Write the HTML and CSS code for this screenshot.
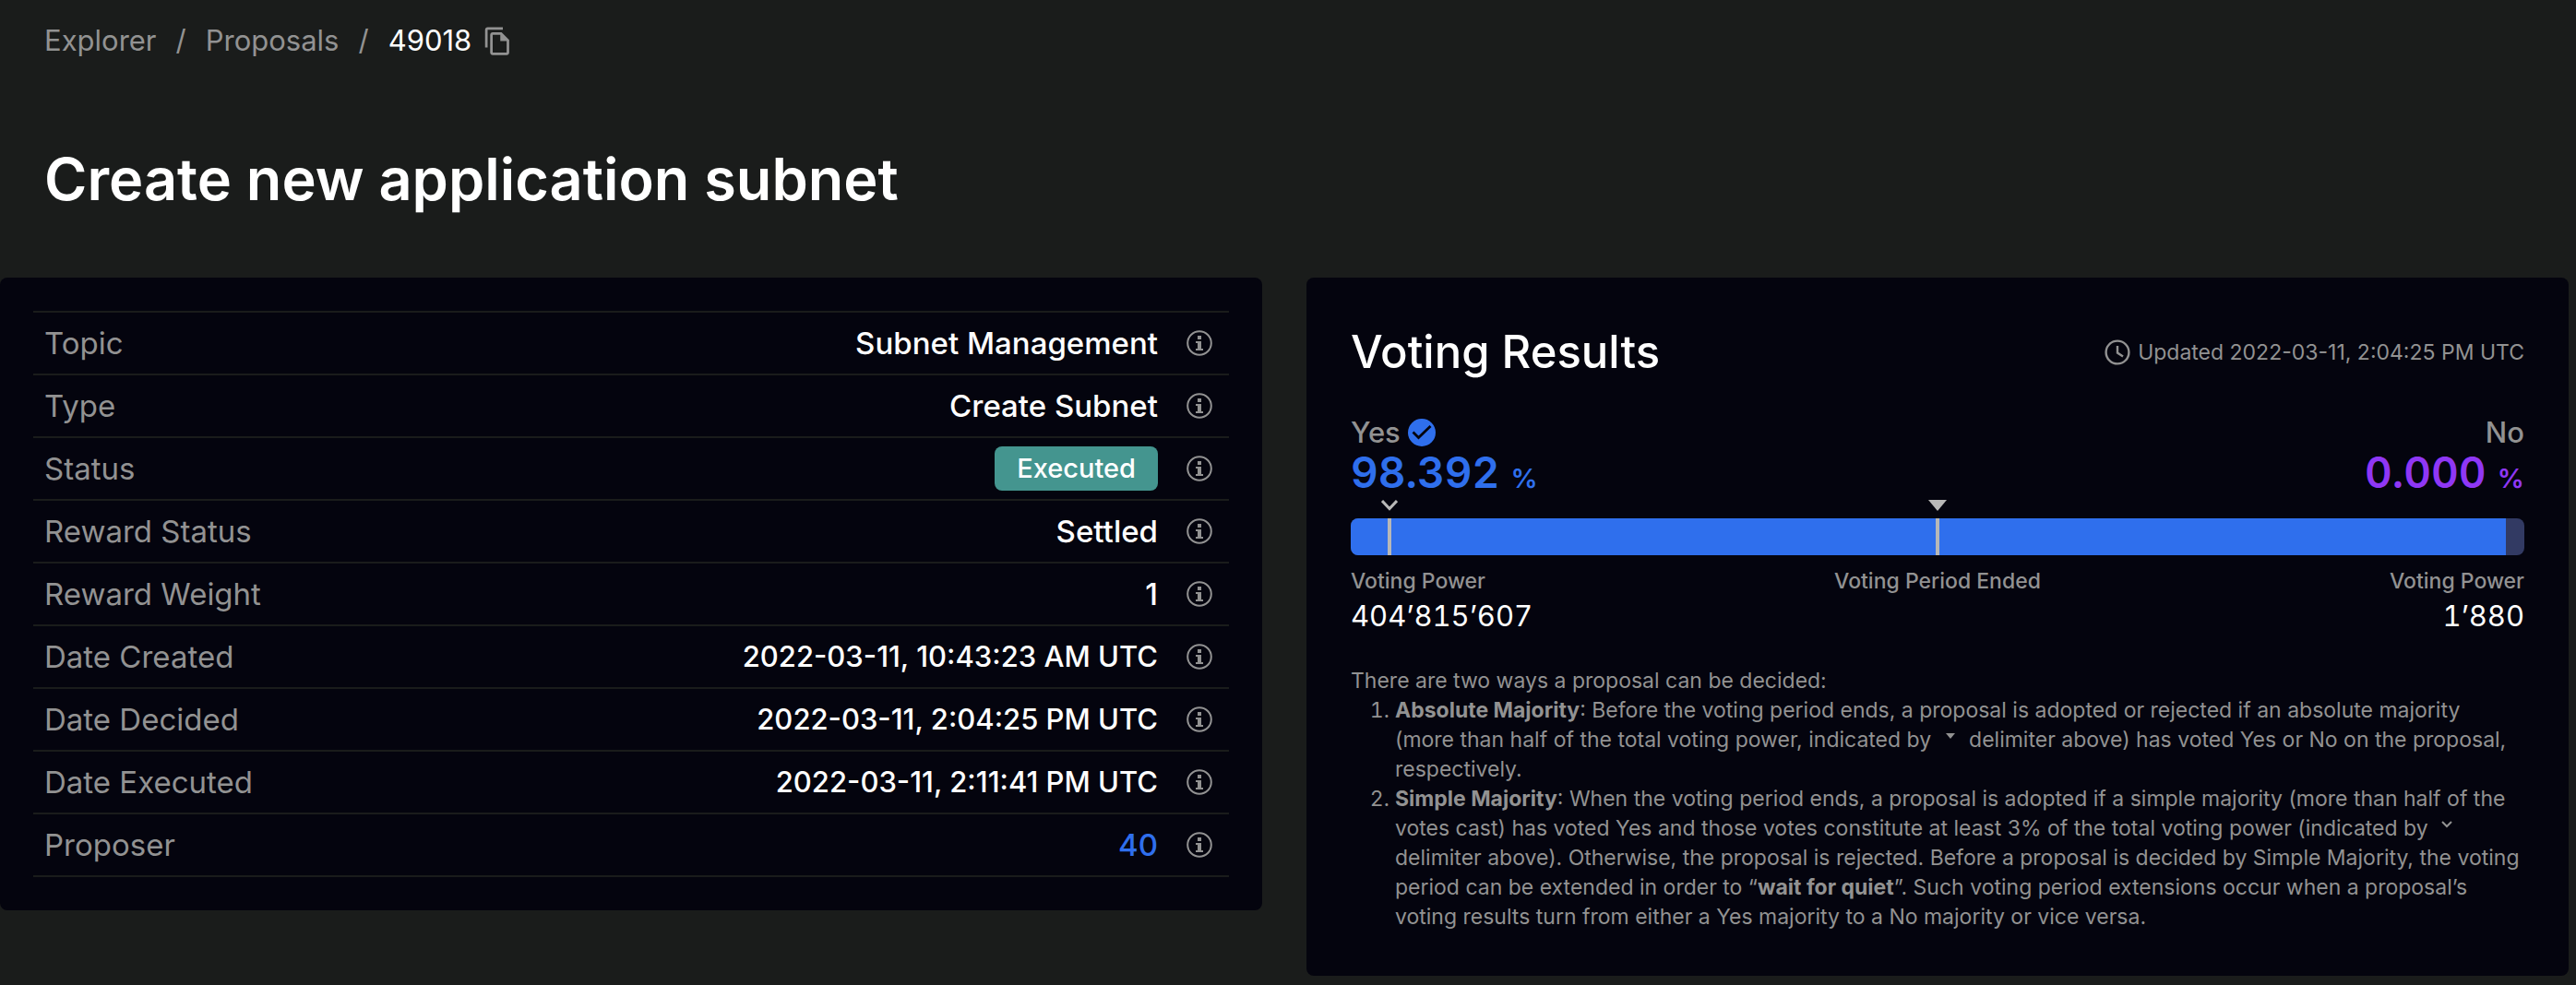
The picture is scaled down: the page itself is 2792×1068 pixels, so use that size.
FILE: index.html
```html
<!DOCTYPE html>
<html lang="en">
<head>
<meta charset="utf-8">
<meta name="viewport" content="width=device-width, initial-scale=1">
<title>Proposal 49018</title>
<link rel="stylesheet" href="styles.css">
</head>
<body>
<svg class="sprite" aria-hidden="true">
  <symbol id="info" viewBox="0 0 28 28">
    <circle cx="14" cy="14" r="12.8" fill="none" stroke="currentColor" stroke-width="2"/>
    <path d="M12 6h4v4h-4zM10 12h6v8h2v2h-8v-2h2v-6h-2z" fill="currentColor"/>
  </symbol>
</svg>
<nav class="crumbs" aria-label="Breadcrumb">
  <a href="#">Explorer</a>
  <span>/</span>
  <a href="#">Proposals</a>
  <span>/</span>
  <span class="crumb-current">49018</span>
  <button class="copy" type="button" aria-label="Copy proposal ID">
    <svg viewBox="0 0 24 24" width="33" height="33" fill="currentColor"><path d="M16 1H4c-1.100 0-2 .9-2 2v14h2V3h12V1zm-1 4H8c-1.100 0-1.990.9-1.990 2L6 21c0 1.100.89 2 1.990 2H19c1.100 0 2-.9 2-2V11l-6-6zM8 21V7h6v5h5v9H8z"/></svg>
  </button>
</nav>
<h1 class="title">Create new application subnet</h1>
<main class="cards">
  <section class="card details">
    <dl class="rows">
      <div class="row"><dt>Topic</dt><dd>Subnet Management</dd><svg class="info"><use href="#info"/></svg></div>
      <div class="row"><dt>Type</dt><dd>Create Subnet</dd><svg class="info"><use href="#info"/></svg></div>
      <div class="row"><dt>Status</dt><dd><span class="badge">Executed</span></dd><svg class="info"><use href="#info"/></svg></div>
      <div class="row"><dt>Reward Status</dt><dd>Settled</dd><svg class="info"><use href="#info"/></svg></div>
      <div class="row"><dt>Reward Weight</dt><dd>1</dd><svg class="info"><use href="#info"/></svg></div>
      <div class="row"><dt>Date Created</dt><dd class="date">2022-03-11, 10:43:23 AM UTC</dd><svg class="info"><use href="#info"/></svg></div>
      <div class="row"><dt>Date Decided</dt><dd class="date">2022-03-11, 2:04:25 PM UTC</dd><svg class="info"><use href="#info"/></svg></div>
      <div class="row"><dt>Date Executed</dt><dd class="date">2022-03-11, 2:11:41 PM UTC</dd><svg class="info"><use href="#info"/></svg></div>
      <div class="row"><dt>Proposer</dt><dd><a class="link" href="#">40</a></dd><svg class="info"><use href="#info"/></svg></div>
    </dl>
  </section>
  <section class="card voting">
    <header class="voting-head">
      <h2>Voting Results</h2>
      <p class="updated">
        <svg viewBox="0 0 28 28" width="28" height="28" fill="none" stroke="currentColor" stroke-width="2.400"><circle cx="14" cy="14" r="12.400"/><path d="M14 7v7.500l6 4"/></svg>
        Updated 2022-03-11, 2:04:25 PM UTC
      </p>
    </header>
    <div class="tally">
      <div class="side">
        <p class="side-name">Yes
          <svg viewBox="0 0 30 30" width="30" height="30"><circle cx="15" cy="15" r="15" fill="#2f6fed"/><path d="M5.500 14.500l6 6L24.500 8" fill="none" stroke="#04040e" stroke-width="2.800"/></svg>
        </p>
        <p class="percent yes">98.392 <small>%</small></p>
      </div>
      <div class="side side-no">
        <p class="side-name">No</p>
        <p class="percent no">0.000 <small>%</small></p>
      </div>
    </div>
    <div class="meter">
      <div class="track"><div class="fill" style="width:98.392%"></div></div>
      <div class="mark simple"><svg viewBox="0 0 18 12" width="18" height="12" fill="none" stroke="currentColor" stroke-width="3"><path d="M1 1l8 8.500L17 1"/></svg></div>
      <div class="mark absolute"><svg viewBox="0 0 20 12" width="20" height="12" fill="currentColor"><path d="M0 0h20L10 12z"/></svg></div>
    </div>
    <div class="power">
      <p>Voting Power<b>404’815’607</b></p>
      <p>Voting Period Ended</p>
      <p>Voting Power<b>1’880</b></p>
    </div>
    <div class="notes">
      <p>There are two ways a proposal can be decided:</p>
      <ol>
        <li><strong>Absolute Majority</strong>: Before the voting period ends, a proposal is adopted or rejected if an absolute majority<br>
          (more than half of the total voting power, indicated by <svg class="glyph" viewBox="0 0 12 8" fill="currentColor"><path d="M1 1h10L6 7z"/></svg> delimiter above) has voted Yes or No on the proposal,<br>
          respectively.</li>
        <li><strong>Simple Majority</strong>: When the voting period ends, a proposal is adopted if a simple majority (more than half of the<br>
          votes cast) has voted Yes and those votes constitute at least 3% of the total voting power (indicated by <svg class="glyph" viewBox="0 0 12 8" fill="none" stroke="currentColor" stroke-width="2"><path d="M1 1l5 5 5-5"/></svg><br>
          delimiter above). Otherwise, the proposal is rejected. Before a proposal is decided by Simple Majority, the voting<br>
          period can be extended in order to “<strong>wait for quiet</strong>”. Such voting period extensions occur when a proposal’s<br>
          voting results turn from either a Yes majority to a No majority or vice versa.</li>
      </ol>
    </div>
  </section>
</main>
</body>
</html>
```
FILE: styles.css
```css
* { box-sizing: border-box; }
body {
  margin: 0;
  background: #1a1c1b;
  color: #fff;
  font-family: Inter, "Liberation Sans", sans-serif;
  font-size: 31px;
  line-height: 44px;
}
h1, h2, p, dl, dd, ol { margin: 0; }
a { color: inherit; text-decoration: none; }
.sprite { position: absolute; width: 0; height: 0; }

.crumbs {
  display: flex;
  align-items: center;
  gap: 21px;
  padding: 22px 48px 0;
  color: #929292;
}
.crumb-current { color: #fff; }
.copy {
  display: flex;
  margin-left: -9px;
  padding: 0;
  border: 0;
  background: none;
  color: inherit;
}
.title {
  padding: 82px 48px 61px;
  font-size: 63px;
  font-weight: 600;
  line-height: 92px;
}

.cards {
  display: grid;
  grid-template-columns: 1fr 1fr;
  align-items: start;
  gap: 48px;
  padding-right: 8px;
}
.card { border-radius: 8px; background: #04040e; }

.details { padding: 36px; font-size: 33px; }
.rows { border-top: 2px solid #1a1c1b; }
.row {
  display: flex;
  align-items: center;
  height: 68px;
  padding: 0 18px 0 12px;
  border-bottom: 2px solid #1a1c1b;
}
.row dt { flex: 1; color: #929292; }
.row dd { font-weight: 500; }
.row .date { font-size: 31px; }
.info { width: 28px; height: 28px; margin-left: 31px; color: #929292; }
.badge {
  display: block;
  padding: 0 24px;
  border-radius: 8px;
  background: #44958f;
  font-size: 29px;
  line-height: 48px;
}
.link { color: #2f6fed; }

.voting { padding: 48px; color: #929292; }
.voting-head { display: flex; align-items: center; justify-content: space-between; }
.voting-head h2 { color: #fff; font-size: 49px; font-weight: 500; line-height: 66px; }
.updated { display: flex; align-items: center; gap: 8px; font-size: 23px; }
.tally { display: flex; justify-content: space-between; margin-top: 32px; }
.side-name { display: flex; align-items: center; gap: 8px; font-weight: 500; }
.side-no .side-name { justify-content: flex-end; }
.percent { font-size: 46px; font-weight: 600; line-height: 42px; font-variant-numeric: tabular-nums; }
.percent small { font-size: 29px; }
.yes { color: #2f6fed; }
.no { color: #8f37f5; }

.meter { position: relative; margin-top: 22px; color: #b8b8b8; }
.track { height: 40px; overflow: hidden; border-radius: 8px; background: #323a63; }
.fill { height: 100%; background: #2f6fed; }
.mark { position: absolute; top: 0; width: 4px; height: 40px; margin-left: -2px; background: currentColor; }
.mark svg { position: absolute; bottom: 48px; left: 50%; transform: translateX(-50%); }
.simple { left: 3.3%; }
.absolute { left: 50%; }

.power {
  display: grid;
  grid-template-columns: 1fr 1fr 1fr;
  padding-top: 12px;
  font-size: 23px;
  font-weight: 500;
  line-height: 32px;
}
.power p:nth-child(2) { text-align: center; }
.power p:nth-child(3) { text-align: right; }
.power b {
  display: block;
  color: #fff;
  font-size: 31px;
  font-weight: 400;
  line-height: 44px;
  font-variant-numeric: tabular-nums;
}

.notes { padding-top: 32px; font-size: 23px; line-height: 32px; }
.notes ol { padding-left: 48px; }
.glyph { width: 12px; height: 8px; margin: 0 8px; vertical-align: 8px; }
```
